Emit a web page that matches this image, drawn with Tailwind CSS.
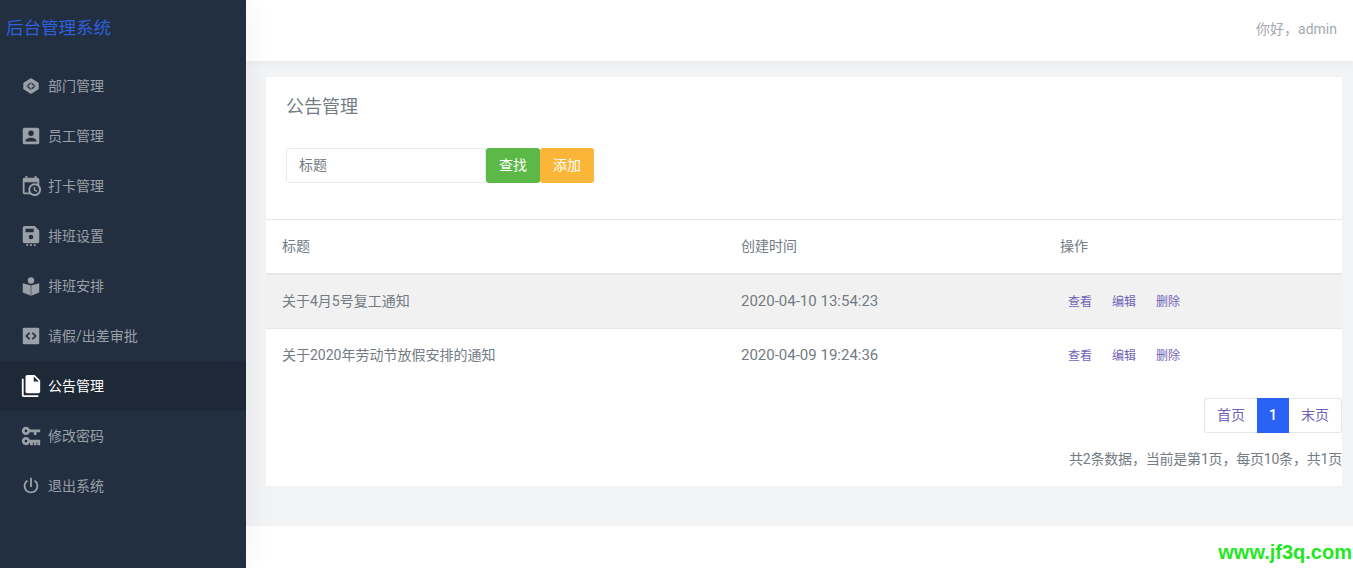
<!DOCTYPE html>
<html lang="zh">
<head>
<meta charset="UTF-8">
<title>后台管理系统</title>
<script src="https://cdn.jsdelivr.net/npm/@tailwindcss/browser@4"></script>
</head>
<body class="bg-white font-['Roboto','Noto_Sans_CJK_SC',sans-serif] text-[14px] text-[#737b83] overflow-hidden">
<div class="relative flex h-[568px] w-[1353px] overflow-hidden">
  <!-- sidebar -->
  <aside class="relative z-20 w-[246px] shrink-0 bg-[#222f41] text-[#9aa0a8] shadow-[8px_0_20px_rgba(0,0,0,0.035)]">
    <div class="flex h-[61px] items-center pl-[6px] pb-[5px] text-[17.5px] text-[#2f5fdc]">后台管理系统</div>
    <nav class="flex flex-col">
      <a class="flex h-[50px] items-center gap-[6px] pl-[20px]">
        <svg class="size-[22px]" viewBox="0 0 24 24" fill="currentColor"><path fill-rule="evenodd" d="M12 3.500a1.500 1.500 0 0 1 .8.25l6.900 4.300a1.500 1.500 0 0 1 .7 1.250v5.400a1.500 1.500 0 0 1-.7 1.250l-6.900 4.300a1.500 1.500 0 0 1-1.600 0l-6.900-4.300a1.500 1.500 0 0 1-.7-1.250V9.300a1.500 1.500 0 0 1 .7-1.250l6.900-4.300A1.500 1.500 0 0 1 12 3.500ZM12 7.500 6.500 12l5.500 4.500 5.500-4.500L12 7.500Z"/><circle cx="12" cy="12" r="2.200"/><path d="M12 7.500v2.500M12 14v2.500M6.500 12H10M14 12h3.500" stroke="currentColor" stroke-width="1"/></svg>
        <span>部门管理</span>
      </a>
      <a class="flex h-[50px] items-center gap-[6px] pl-[20px]">
        <svg class="size-[22px]" viewBox="0 0 24 24" fill="currentColor"><path d="M6,17C6,15 10,13.9 12,13.9C14,13.9 18,15 18,17V18H6M15,9A3,3 0 0,1 12,12A3,3 0 0,1 9,9A3,3 0 0,1 12,6A3,3 0 0,1 15,9M3,5V19A2,2 0 0,0 5,21H19A2,2 0 0,0 21,19V5A2,2 0 0,0 19,3H5C3.89,3 3,3.9 3,5Z"/></svg>
        <span>员工管理</span>
      </a>
      <a class="flex h-[50px] items-center gap-[6px] pl-[20px]">
        <svg class="size-[22px]" viewBox="0 0 24 24" fill="currentColor"><path d="M15,13H16.5V15.82L18.94,17.23L18.19,18.53L15,16.69V13M19,8H5V19H9.67C9.24,18.09 9,17.07 9,16A7,7 0 0,1 16,9C17.07,9 18.09,9.24 19,9.67V8M5,21C3.89,21 3,20.1 3,19V5C3,3.89 3.89,3 5,3H6V1H8V3H16V1H18V3H19A2,2 0 0,1 21,5V11.1C22.24,12.36 23,14.09 23,16A7,7 0 0,1 16,23C14.09,23 12.36,22.24 11.1,21H5M16,11.15A4.85,4.85 0 0,0 11.15,16C11.15,18.68 13.32,20.85 16,20.85A4.85,4.85 0 0,0 20.85,16C20.85,13.32 18.68,11.15 16,11.15Z"/></svg>
        <span>打卡管理</span>
      </a>
      <a class="flex h-[50px] items-center gap-[6px] pl-[20px]">
        <svg class="size-[22px]" viewBox="0 0 24 24" fill="currentColor"><path fill-rule="evenodd" d="M5 1h11l5 5v12a2 2 0 0 1-2 2H5a2 2 0 0 1-2-2V3a2 2 0 0 1 2-2Zm1 3v4h9V4H6Zm6 6.500a2.500 2.500 0 1 0 0 5 2.500 2.500 0 0 0 0-5Z"/><path d="M7 21h2v2H7zM11 21h2v2h-2zM15 21h2v2h-2z"/></svg>
        <span>排班设置</span>
      </a>
      <a class="flex h-[50px] items-center gap-[6px] pl-[20px]">
        <svg class="size-[22px]" viewBox="0 0 24 24" fill="currentColor"><circle cx="12" cy="6" r="3.500"/><path d="M12 11.500 3 9v10l9 3.500 9-3.500V9l-9 2.500Z"/><path d="M12 11.500V22" stroke="#222f41" stroke-width=".6"/></svg>
        <span>排班安排</span>
      </a>
      <a class="flex h-[50px] items-center gap-[6px] pl-[20px]">
        <svg class="size-[22px]" viewBox="0 0 24 24" fill="currentColor"><rect x="3" y="3" width="18" height="18" rx="1.500"/><path d="M10.500 8.500 7 12l3.500 3.500M13.500 8.500 17 12l-3.500 3.500" stroke="#222f41" stroke-width="1.800" fill="none"/></svg>
        <span>请假/出差审批</span>
      </a>
      <a class="flex h-[50px] items-center gap-[6px] bg-[#1e2937] pl-[20px] text-white">
        <svg class="size-[22px]" viewBox="0 0 24 24" fill="currentColor"><path d="M15,7H20.5L15,1.5V7M8,0H16L22,6V18A2,2 0 0,1 20,20H8C6.89,20 6,19.1 6,18V2A2,2 0 0,1 8,0M4,4V22H20V24H4A2,2 0 0,1 2,22V4H4Z"/></svg>
        <span>公告管理</span>
      </a>
      <a class="flex h-[50px] items-center gap-[6px] pl-[20px]">
        <svg class="size-[22px]" viewBox="0 0 24 24" fill="currentColor"><path d="M6.5,2C8.46,2 10.13,3.25 10.74,5H22V8H18V11H15V8H10.74C10.13,9.75 8.46,11 6.5,11C4,11 2,9 2,6.5C2,4 4,2 6.5,2M6.5,5A1.5,1.5 0 0,0 5,6.5A1.5,1.5 0 0,0 6.5,8A1.5,1.5 0 0,0 8,6.5A1.5,1.5 0 0,0 6.5,5M6.5,13C8.46,13 10.13,14.25 10.74,16H22V22H19V19H18V22H15V19H14V22H11V19H10.74C10.13,20.75 8.46,22 6.5,22C4,22 2,20 2,17.5C2,15 4,13 6.5,13M6.5,16A1.5,1.5 0 0,0 5,17.5A1.5,1.5 0 0,0 6.5,19A1.5,1.5 0 0,0 8,17.5A1.5,1.5 0 0,0 6.5,16Z"/></svg>
        <span>修改密码</span>
      </a>
      <a class="flex h-[50px] items-center gap-[6px] pl-[20px]">
        <svg class="size-[22px]" viewBox="0 0 24 24" fill="currentColor"><path d="M16.56,5.44L15.11,6.89C16.84,7.94 18,9.83 18,12A6,6 0 0,1 12,18A6,6 0 0,1 6,12C6,9.83 7.16,7.94 8.88,6.88L7.44,5.44C5.36,6.88 4,9.28 4,12A8,8 0 0,0 12,20A8,8 0 0,0 20,12C20,9.28 18.64,6.88 16.56,5.44M13,3H11V13H13"/></svg>
        <span>退出系统</span>
      </a>
    </nav>
  </aside>

  <!-- right side -->
  <div class="flex min-w-0 flex-1 flex-col">
    <header class="relative z-10 flex h-[61px] shrink-0 items-center justify-end bg-white pr-[16px] pb-[3px] text-[#a3a9b0] shadow-[0_2px_6px_rgba(0,0,0,0.04)]">你好，admin</header>
    <main class="h-[465px] shrink-0 bg-[#f2f3f5] pt-[16px] pr-[11px] pl-[20px]">
      <section class="h-[409px] bg-white">
        <h2 class="pt-[17px] pl-[20px] text-[18px] leading-[26px]">公告管理</h2>
        <form class="mt-[28px] flex h-[36px] pl-[20px] pb-[1px]">
          <div class="flex w-[200px] items-center rounded-l-[3px] border border-[#e8ebed] pl-[12px]">标题</div>
          <button class="w-[54px] rounded-[3px] bg-[#5cb947] text-white">查找</button>
          <button class="w-[54px] rounded-[3px] bg-[#fbb637] text-white">添加</button>
        </form>
        <div class="mt-[35px] border-t border-[#e6e8ea]">
          <div class="grid h-[55px] grid-cols-[459px_319px_1fr] items-center border-b-2 border-[#e4e6e8] pl-[16px]">
            <span>标题</span><span>创建时间</span><span>操作</span>
          </div>
          <div class="grid h-[54px] grid-cols-[459px_327px_1fr] items-center border-b border-[#e4e6e8] bg-[#f1f1f2] pl-[16px]">
            <span>关于4月5号复工通知</span><span class="text-[15px]">2020-04-10 13:54:23</span>
            <span class="flex gap-[20px] text-[12px] text-[#6f63b8]"><a>查看</a><a>编辑</a><a>删除</a></span>
          </div>
          <div class="grid h-[53px] grid-cols-[459px_327px_1fr] items-center pl-[16px]">
            <span>关于2020年劳动节放假安排的通知</span><span class="text-[15px]">2020-04-09 19:24:36</span>
            <span class="flex gap-[20px] text-[12px] text-[#6f63b8]"><a>查看</a><a>编辑</a><a>删除</a></span>
          </div>
        </div>
        <div class="mt-[16px] flex justify-end">
          <div class="flex h-[35px]">
            <a class="flex w-[53px] items-center justify-center rounded-l-[3px] border border-r-0 border-[#e4e6e8] text-[#6f63b8]">首页</a>
            <a class="flex w-[32px] items-center justify-center bg-[#2962f5] font-medium text-white">1</a>
            <a class="flex w-[53px] items-center justify-center rounded-r-[3px] border border-l-0 border-[#e4e6e8] text-[#6f63b8]">末页</a>
          </div>
        </div>
        <p class="mt-[16px] text-right leading-[20px] tracking-[-0.2px]">共2条数据，当前是第1页，每页10条，共1页</p>
      </section>
    </main>
    <footer class="flex-1 bg-white"></footer>
  </div>
  <span class="absolute right-[1px] bottom-[4px] font-['Liberation_Sans',sans-serif] text-[20px] leading-[24px] font-bold text-[#1fe81f]">www.jf3q.com</span>
</div>
</body>
</html>
